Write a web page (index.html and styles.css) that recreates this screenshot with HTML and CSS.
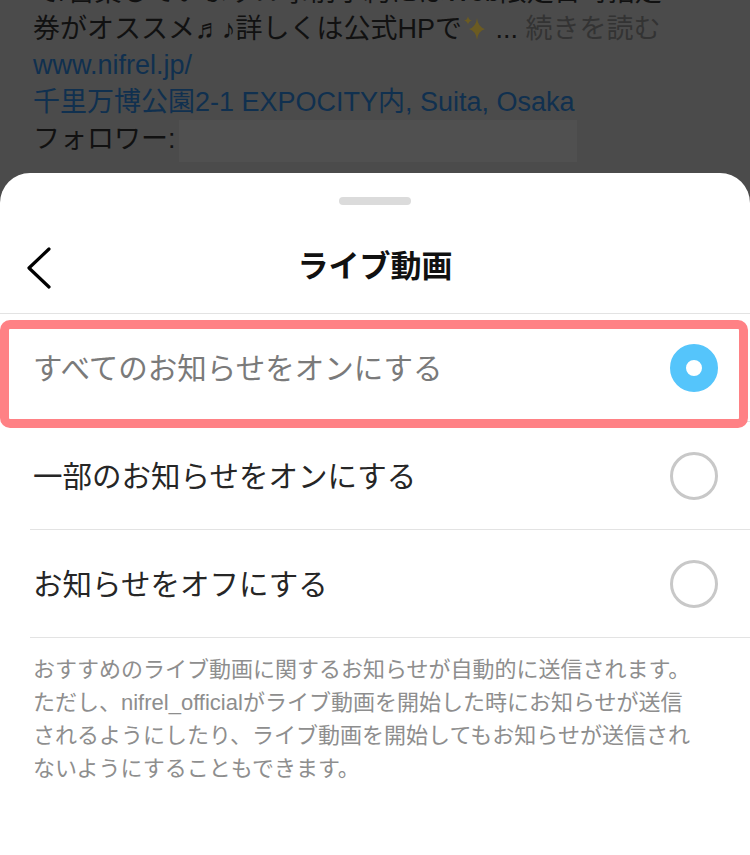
FILE: index.html
```html
<!DOCTYPE html>
<html lang="ja">
<head>
    <meta charset="UTF-8">
    <meta name="viewport" content="width=device-width, initial-scale=1.0">
    <title>ライブ動画</title>
    <link rel="stylesheet" href="styles.css">
</head>
<body>
    <!-- Dimmed profile behind the sheet -->
    <div class="backdrop">
        <div class="bio">
            <div class="bio-line">で/営業しています♪♪事前予約にはWeb限定日時指定</div>
            <div class="bio-line">券がオススメ<span class="notes">♬♪</span>詳しくは公式HPで<svg class="sparkle" width="26" height="28" viewBox="0 0 26 28"><path d="M15 4 Q16 13 23 15 Q16 17 15 26 Q14 17 7 15 Q14 13 15 4Z" fill="#6b5b22"/><path d="M6 2 Q6.5 6 10 6.5 Q6.5 7 6 11 Q5.5 7 2 6.5 Q5.5 6 6 2Z" fill="#6b5b22"/></svg> ... <span class="more">続きを読む</span></div>
            <div class="bio-line link">www.nifrel.jp/</div>
            <div class="bio-line link">千里万博公園2-1 EXPOCITY内, Suita, Osaka</div>
            <div class="bio-line">フォロワー: <span class="redacted"></span></div>
        </div>
    </div>

    <div class="sheet">
        <div class="handle"></div>

        <div class="sheet-header">
            <svg class="back" width="26" height="44" viewBox="0 0 26 44">
                <path d="M23 3 L3 22 L23 41" fill="none" stroke="#000" stroke-width="3.2" stroke-linecap="round" stroke-linejoin="round"/>
            </svg>
            <h1>ライブ動画</h1>
        </div>

        <div class="options">
            <div class="option">
                <span class="option-label muted">すべてのお知らせをオンにする</span>
                <span class="radio checked"></span>
            </div>
            <div class="option">
                <span class="option-label">一部のお知らせをオンにする</span>
                <span class="radio"></span>
            </div>
            <div class="option">
                <span class="option-label">お知らせをオフにする</span>
                <span class="radio"></span>
            </div>
        </div>

        <p class="note">おすすめのライブ動画に関するお知らせが自動的に送信されます。<br>ただし、nifrel_officialがライブ動画を開始した時にお知らせが送信<br>されるようにしたり、ライブ動画を開始してもお知らせが送信され<br>ないようにすることもできます。</p>

        <div class="highlight"></div>
    </div>
</body>
</html>
```

FILE: styles.css
```css
* {
    margin: 0;
    padding: 0;
    box-sizing: border-box;
}

body {
    font-family: "Liberation Sans", "Noto Sans CJK JP", sans-serif;
    background-color: #4b4b4b;
    color: #111;
    width: 750px;
    height: 855px;
    overflow: hidden;
}

/* Profile text behind the overlay */
.backdrop {
    height: 173px;
    overflow: hidden;
}

.bio {
    margin-top: -26px;
    padding: 0 33px;
    font-size: 27px;
    line-height: 36.5px;
    white-space: nowrap;
}

.bio-line {
    height: 36.5px;
}

.notes {
    color: #111;
}

.sparkle {
    vertical-align: -4px;
}

.more {
    color: #333;
}

.link {
    color: #10304f;
}

.redacted {
    display: inline-block;
    width: 398px;
    height: 42px;
    vertical-align: -14px;
    margin-left: -4px;
    background-color: #505050;
}

/* Bottom sheet */
.sheet {
    position: relative;
    background-color: #fff;
    border-radius: 30px 30px 0 0;
    height: 682px;
    padding-top: 24px;
}

.handle {
    width: 72px;
    height: 8px;
    margin: 0 auto;
    border-radius: 4px;
    background-color: #dbdbdb;
}

.sheet-header {
    display: grid;
    grid-template-columns: 1fr auto 1fr;
    align-items: center;
    height: 109px;
    padding: 18px 26px 0;
    border-bottom: 1px solid #e3e3e3;
}

.back {
    display: block;
}

h1 {
    font-size: 31px;
    font-weight: bold;
    color: #111;
    line-height: 1;
    margin-top: -3px;
}

.option {
    display: flex;
    align-items: center;
    justify-content: space-between;
    height: 108px;
    margin-left: 30px;
    padding: 0 32px 0 3px;
    border-bottom: 1px solid #e3e3e3;
}

.option-label {
    font-size: 29.5px;
    color: #262626;
    margin-top: -4px;
}

.option-label.muted {
    color: #7a7a7a;
}

.radio {
    width: 48px;
    height: 48px;
    border-radius: 50%;
    border: 3px solid #c8c8c8;
}

.radio.checked {
    border: 16px solid #55c5fb;
    background-color: #fff;
}

.note {
    padding: 15px 20px 0 33px;
    font-size: 22px;
    line-height: 33px;
    color: #8e8e8e;
    white-space: nowrap;
}

/* Red annotation frame over the first option */
.highlight {
    position: absolute;
    top: 147px;
    left: 0;
    width: 748px;
    height: 108px;
    border: 9px solid #ff8185;
    border-radius: 10px;
}
```
